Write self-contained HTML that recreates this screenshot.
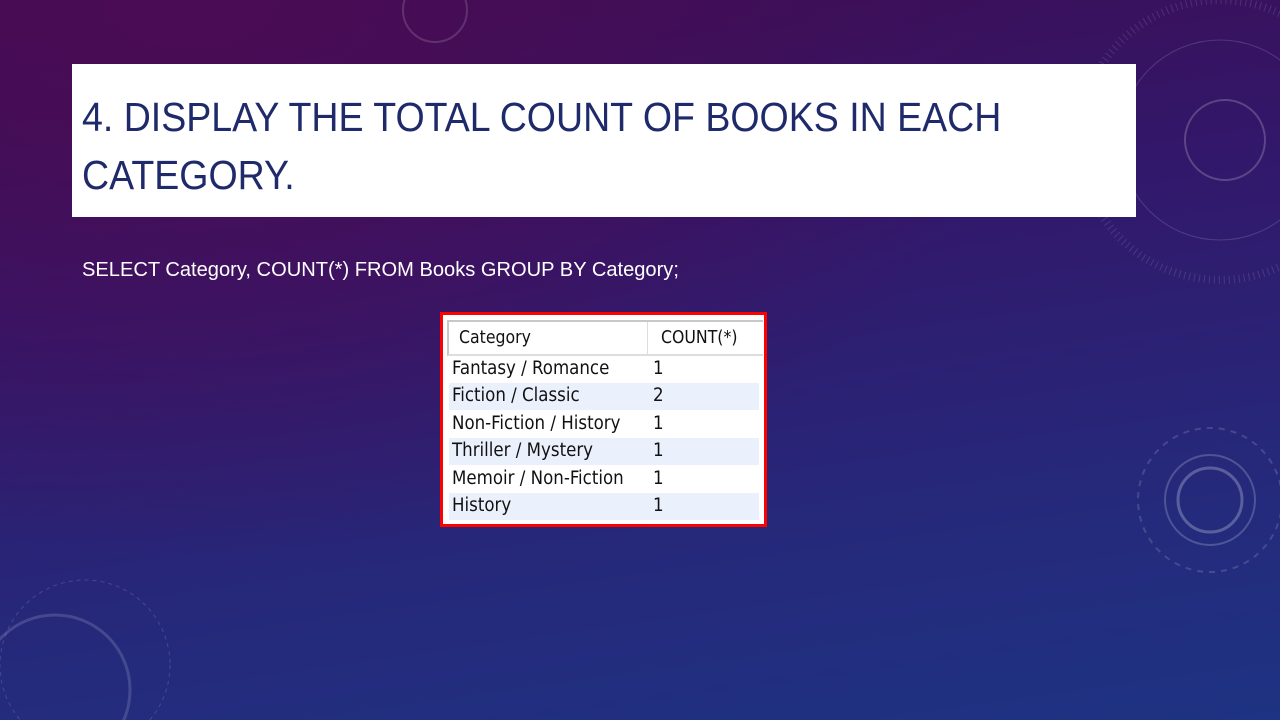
<!DOCTYPE html>
<html><head><style>
html,body{margin:0;padding:0}
body{width:1280px;height:720px;overflow:hidden;position:relative;font-family:"Liberation Sans",sans-serif;
background:radial-gradient(ellipse at 15% 0%,#4a0c55 0%,rgba(70,15,90,0) 55%),linear-gradient(172deg,#3e0c50 0%,#33176a 35%,#26287a 70%,#1e3383 100%);}
.title{position:absolute;left:72px;top:64px;width:1064px;height:153px;background:#fff}
.title div{position:absolute;left:10px;top:24px;font-size:41px;line-height:58px;color:#1f2a6b;transform:scaleX(0.915);transform-origin:0 0;white-space:nowrap}
.sql{position:absolute;left:82px;top:258px;color:#fff;font-size:20.5px;transform:scaleX(0.98);transform-origin:0 0;white-space:nowrap}
.tbl{position:absolute;left:440px;top:312px;width:321px;height:209px;border:3px solid #f00;background:#fff;overflow:hidden}
.row{position:absolute;left:6px;width:310px;height:27px;font-size:18.5px;color:#111;font-family:"DejaVu Sans Condensed","Liberation Sans",sans-serif}
.row span{position:absolute;top:2px}
.row .a{left:3px}.row .b{left:204px}
.alt{background:#eaf1fc}
.hd{position:absolute;left:4px;top:5px;width:314px;height:32px;border-top:2px solid #c8c8c8;border-bottom:2px solid #ddd;border-left:2px solid #c8c8c8}
.hd span{position:absolute;top:6px;font-size:17.5px;font-family:"DejaVu Sans Condensed","Liberation Sans",sans-serif;color:#111}
</style></head><body>
<svg width="1280" height="720" style="position:absolute;left:0;top:0;overflow:hidden" fill="none" stroke="rgba(255,255,255,0.25)">
<circle cx="1220" cy="140" r="100" stroke-width="1" stroke="rgba(255,255,255,0.15)"/>
<circle cx="1220" cy="140" r="140" stroke-width="8" stroke-dasharray="1 4" stroke="rgba(255,255,255,0.12)"/>
<circle cx="1225" cy="140" r="40" stroke-width="2" stroke="rgba(255,255,255,0.2)"/>
<circle cx="1210" cy="500" r="45" stroke-width="2" stroke="rgba(255,255,255,0.2)"/>
<circle cx="1210" cy="500" r="32" stroke-width="3" stroke="rgba(255,255,255,0.25)"/>
<circle cx="1210" cy="500" r="72" stroke-width="2" stroke-dasharray="6 6" stroke="rgba(255,255,255,0.15)"/>
<circle cx="55" cy="690" r="75" stroke-width="3" stroke="rgba(255,255,255,0.15)"/>
<circle cx="85" cy="665" r="85" stroke-width="1" stroke-dasharray="4 4" stroke="rgba(255,255,255,0.15)"/>
<circle cx="435" cy="10" r="32" stroke-width="2" stroke="rgba(255,255,255,0.15)"/>
</svg>
<div class="title"><div>4. DISPLAY THE TOTAL COUNT OF BOOKS IN EACH<br>CATEGORY.</div></div>
<div class="sql">SELECT Category, COUNT(*) FROM Books GROUP BY Category;</div>
<div class="tbl">
<div class="hd"><span style="left:10px">Category</span><span style="left:212px">COUNT(*)</span><div style="position:absolute;left:198px;top:0;width:1px;height:32px;background:#ddd"></div></div>
<div class="row" style="top:41px"><span class="a">Fantasy / Romance</span><span class="b">1</span></div>
<div class="row alt" style="top:68px"><span class="a">Fiction / Classic</span><span class="b">2</span></div>
<div class="row" style="top:96px"><span class="a">Non-Fiction / History</span><span class="b">1</span></div>
<div class="row alt" style="top:123px"><span class="a">Thriller / Mystery</span><span class="b">1</span></div>
<div class="row" style="top:151px"><span class="a">Memoir / Non-Fiction</span><span class="b">1</span></div>
<div class="row alt" style="top:178px"><span class="a">History</span><span class="b">1</span></div>
</div>
</body></html>
